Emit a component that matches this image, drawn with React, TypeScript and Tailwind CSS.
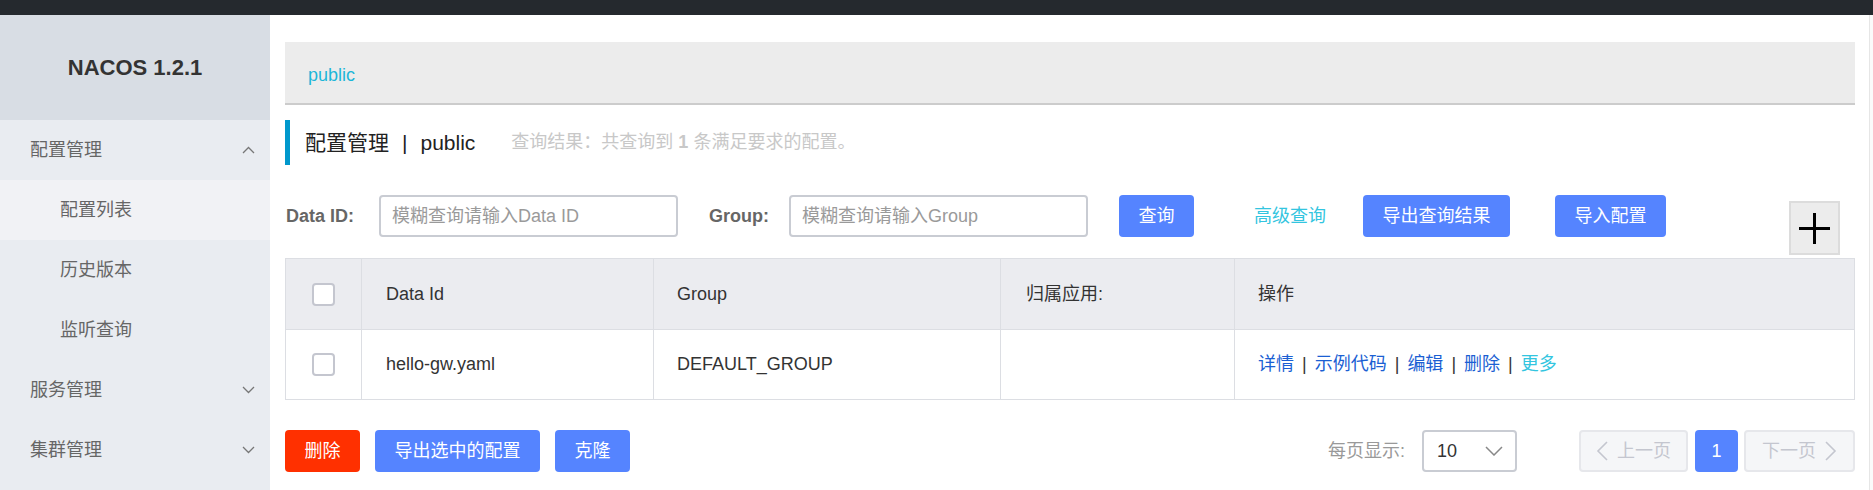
import React from "react";

function Chevron({ up }: { up?: boolean }) {
  return (
    <svg width="13" height="8" viewBox="0 0 13 8" className="text-[#777]">
      {up ? (
        <polyline points="1,7 6.5,1.5 12,7" fill="none" stroke="currentColor" strokeWidth="1.3" />
      ) : (
        <polyline points="1,1 6.5,6.5 12,1" fill="none" stroke="currentColor" strokeWidth="1.3" />
      )}
    </svg>
  );
}

function MenuHead({ label, open }: { label: string; open?: boolean }) {
  return (
    <div className="h-[60px] flex items-center pl-[30px] pr-[15px] text-[18px] text-[#666]">
      <span className="flex-1">{label}</span>
      <Chevron up={open} />
    </div>
  );
}

function SubItem({ label, active }: { label: string; active?: boolean }) {
  return (
    <div
      className={
        "h-[60px] flex items-center pl-[60px] text-[18px] text-[#666] " +
        (active ? "bg-[#f1f2f5]" : "")
      }
    >
      {label}
    </div>
  );
}

function Checkbox() {
  return <div className="w-[23px] h-[23px] rounded-[4px] border-2 border-[#c4c6cf] bg-white" />;
}

function BlueBtn({ label, w, cls }: { label: string; w: string; cls?: string }) {
  return (
    <div
      className={
        "h-[42px] rounded-[4px] bg-[#5584ff] text-white text-[18px] flex items-center justify-center " +
        w +
        " " +
        (cls || "")
      }
    >
      {label}
    </div>
  );
}

export default function App() {
  const cols = "grid grid-cols-[75px_292px_347px_234px_1fr]";
  return (
    <div className="w-[1873px] h-[490px] overflow-hidden flex flex-col bg-white font-['Liberation_Sans','Noto_Sans_CJK_SC',sans-serif]">
      <div className="h-[15px] bg-[#25292e] shrink-0" />
      <div className="flex flex-1 min-h-0">
        <aside className="w-[270px] shrink-0 bg-[#e9ecf1] flex flex-col">
          <div className="h-[105px] bg-[#d8dde4] flex items-center justify-center text-[22px] font-bold text-[#333]">
            NACOS 1.2.1
          </div>
          <MenuHead label="配置管理" open />
          <SubItem label="配置列表" active />
          <SubItem label="历史版本" />
          <SubItem label="监听查询" />
          <MenuHead label="服务管理" />
          <MenuHead label="集群管理" />
        </aside>

        <main className="flex-1 min-w-0 pl-[15px] pr-[14px] pt-[27px] flex flex-col">
          {/* breadcrumb */}
          <div className="h-[63px] bg-[#ececec] border-b-2 border-[#cccccc] pl-[23px] pt-[6px] flex items-center text-[18px] text-[#1cb6d8]">
            public
          </div>

          {/* title */}
          <div className="mt-[15px] h-[45px] border-l-[5px] border-[#0098cc] pl-[15px] flex items-center">
            <span className="text-[21px] text-[#222]">配置管理</span>
            <span className="text-[21px] text-[#222] mx-[13px]">|</span>
            <span className="text-[21px] text-[#222]">public</span>
            <span className="ml-[36px] text-[18px] text-[#c8c8c8]">
              查询结果：共查询到 <b className="font-bold">1</b> 条满足要求的配置。
            </span>
          </div>

          {/* search row */}
          <div className="mt-[30px] h-[60px] flex items-start">
            <div className="w-[94px] h-[42px] flex items-center pl-[1px] text-[18px] font-bold text-[#666]">
              Data ID:
            </div>
            <div className="w-[299px] h-[42px] rounded-[4px] border-2 border-[#c9ccd3] px-[11px] flex items-center text-[18px] text-[#9a9a9a]">
              模糊查询请输入Data ID
            </div>
            <div className="ml-[31px] w-[80px] h-[42px] flex items-center text-[18px] font-bold text-[#666]">
              Group:
            </div>
            <div className="w-[299px] h-[42px] rounded-[4px] border-2 border-[#c9ccd3] px-[11px] flex items-center text-[18px] text-[#9a9a9a]">
              模糊查询请输入Group
            </div>
            <BlueBtn label="查询" w="w-[75px]" cls="ml-[31px]" />
            <div className="ml-[60px] h-[42px] flex items-center text-[18px] text-[#33c5e0]">高级查询</div>
            <BlueBtn label="导出查询结果" w="w-[147px]" cls="ml-[37px]" />
            <BlueBtn label="导入配置" w="w-[111px]" cls="ml-[45px]" />
            <div className="ml-auto mr-[15px] mt-[6px] w-[51px] h-[54px] border-2 border-[#dcdcdc] bg-[#ececec] flex items-center justify-center">
              <svg width="31" height="31" viewBox="0 0 31 31">
                <line x1="0" y1="15.5" x2="31" y2="15.5" stroke="#000" strokeWidth="3" />
                <line x1="15.5" y1="0" x2="15.5" y2="31" stroke="#000" strokeWidth="3" />
              </svg>
            </div>
          </div>

          {/* table */}
          <div className="mt-[3px] border border-[#dcdee3] text-[18px] text-[#333]">
            <div className={cols + " h-[70px] bg-[#ebecf0]"}>
              <div className="flex items-center justify-center">
                <Checkbox />
              </div>
              <div className="border-l border-[#dcdee3] pl-[24px] flex items-center">Data Id</div>
              <div className="border-l border-[#dcdee3] pl-[23px] flex items-center">Group</div>
              <div className="border-l border-[#dcdee3] pl-[25px] flex items-center">归属应用:</div>
              <div className="border-l border-[#dcdee3] pl-[23px] flex items-center">操作</div>
            </div>
            <div className={cols + " h-[70px] border-t border-[#dcdee3] bg-white"}>
              <div className="flex items-center justify-center">
                <Checkbox />
              </div>
              <div className="border-l border-[#dcdee3] pl-[24px] flex items-center">hello-gw.yaml</div>
              <div className="border-l border-[#dcdee3] pl-[23px] flex items-center">DEFAULT_GROUP</div>
              <div className="border-l border-[#dcdee3] pl-[25px] flex items-center" />
              <div className="border-l border-[#dcdee3] pl-[23px] flex items-center">
                <span className="text-[#1b5fd3]">详情</span>
                <span className="mx-[8px] text-[#333]">|</span>
                <span className="text-[#1b5fd3]">示例代码</span>
                <span className="mx-[8px] text-[#333]">|</span>
                <span className="text-[#1b5fd3]">编辑</span>
                <span className="mx-[8px] text-[#333]">|</span>
                <span className="text-[#1b5fd3]">删除</span>
                <span className="mx-[8px] text-[#333]">|</span>
                <span className="text-[#33c5e0]">更多</span>
              </div>
            </div>
          </div>

          {/* bottom row */}
          <div className="mt-[30px] h-[42px] flex items-center">
            <div className="w-[75px] h-[42px] rounded-[4px] bg-[#ff3000] text-white text-[18px] flex items-center justify-center">
              删除
            </div>
            <BlueBtn label="导出选中的配置" w="w-[165px]" cls="ml-[15px]" />
            <BlueBtn label="克隆" w="w-[75px]" cls="ml-[15px]" />

            <div className="ml-auto text-[18px] text-[#999]">每页显示:</div>
            <div className="ml-[17px] w-[95px] h-[42px] rounded-[4px] border-2 border-[#c9ccd3] pl-[13px] pr-[12px] flex items-center justify-between text-[18px] text-[#333]">
              <span>10</span>
              <svg width="18" height="10" viewBox="0 0 18 10">
                <polyline points="1,1 9,9 17,1" fill="none" stroke="#888" strokeWidth="1.5" />
              </svg>
            </div>
            <div className="ml-[62px] w-[109px] h-[42px] rounded-[4px] border-2 border-[#e6e7eb] bg-[#f5f6f8] flex items-center justify-center text-[18px] text-[#c4c6cf]">
              <svg width="12" height="20" viewBox="0 0 12 20" className="mr-[9px]">
                <polyline points="11,1 2,10 11,19" fill="none" stroke="#c4c6cf" strokeWidth="1.6" />
              </svg>
              上一页
            </div>
            <div className="ml-[7px] w-[43px] h-[42px] rounded-[4px] bg-[#5584ff] text-white text-[18px] flex items-center justify-center">
              1
            </div>
            <div className="ml-[6px] w-[111px] h-[42px] rounded-[4px] border-2 border-[#e6e7eb] bg-[#f5f6f8] flex items-center justify-center text-[18px] text-[#c4c6cf]">
              下一页
              <svg width="12" height="20" viewBox="0 0 12 20" className="ml-[9px]">
                <polyline points="1,1 10,10 1,19" fill="none" stroke="#c4c6cf" strokeWidth="1.6" />
              </svg>
            </div>
          </div>
        </main>
        <div className="w-[4px] shrink-0 border-l border-[#e6e6e6] bg-[#fafafa]" />
      </div>
    </div>
  );
}
